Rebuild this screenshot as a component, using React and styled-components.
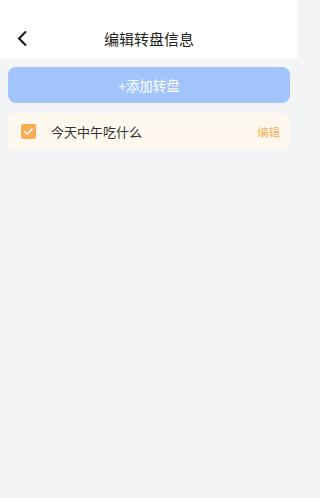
import styled, { createGlobalStyle } from "styled-components";

const Global = createGlobalStyle`
  html, body {
    margin: 0;
    padding: 0;
    background: #f3f4f6;
    font-family: "Noto Sans CJK SC", "Noto Sans", sans-serif;
  }
`;

const Page = styled.div`
  width: 298px;
  min-height: 498px;
  background: #f3f4f6;
`;

const Header = styled.div`
  height: 58px;
  background: #ffffff;
  display: flex;
  align-items: flex-end;
  justify-content: center;
  position: relative;
  padding-bottom: 8px;
  box-sizing: border-box;
`;

const Back = styled.button`
  position: absolute;
  left: 12px;
  bottom: 10px;
  width: 20px;
  height: 20px;
  padding: 0;
  border: none;
  background: none;
  display: flex;
  align-items: center;
  justify-content: center;
`;

const Title = styled.h1`
  margin: 0;
  font-size: 15px;
  font-weight: 400;
  color: #222;
  line-height: 22px;
`;

const Body = styled.div`
  padding: 9px 8px;
  display: flex;
  flex-direction: column;
  gap: 10px;
`;

const AddBtn = styled.button`
  height: 36px;
  border: none;
  border-radius: 8px;
  background: #a1c5fb;
  color: #ffffff;
  font-family: inherit;
  font-size: 13.5px;
  display: flex;
  align-items: center;
  justify-content: center;
`;

const Item = styled.div`
  height: 37px;
  border-radius: 8px;
  background: #fff8ef;
  display: flex;
  align-items: center;
  padding: 0 10px 0 13px;
`;

const Check = styled.span`
  width: 15px;
  height: 15px;
  border-radius: 2px;
  background: #f8ad55;
  display: flex;
  align-items: center;
  justify-content: center;
  flex-shrink: 0;
`;

const Name = styled.span`
  flex: 1;
  margin-left: 15px;
  font-size: 13px;
  color: #333;
`;

const Edit = styled.span`
  font-size: 11.5px;
  color: #efb35f;
`;

const App = () => {
  return (
    <Page>
      <Global />
      <Header>
        <Back>
          <svg width="12" height="17" viewBox="0 0 12 17">
            <path d="M10 1.5 L3 8.5 L10 15.5" fill="none" stroke="#111" strokeWidth="2" />
          </svg>
        </Back>
        <Title>编辑转盘信息</Title>
      </Header>
      <Body>
        <AddBtn>+添加转盘</AddBtn>
        <Item>
          <Check>
            <svg width="11" height="9" viewBox="0 0 11 9">
              <path d="M1.5 4.5 L4.2 7 L9.5 1.5" fill="none" stroke="#fff" strokeWidth="1.6" />
            </svg>
          </Check>
          <Name>今天中午吃什么</Name>
          <Edit>编辑</Edit>
        </Item>
      </Body>
    </Page>
  );
};

export default App;
